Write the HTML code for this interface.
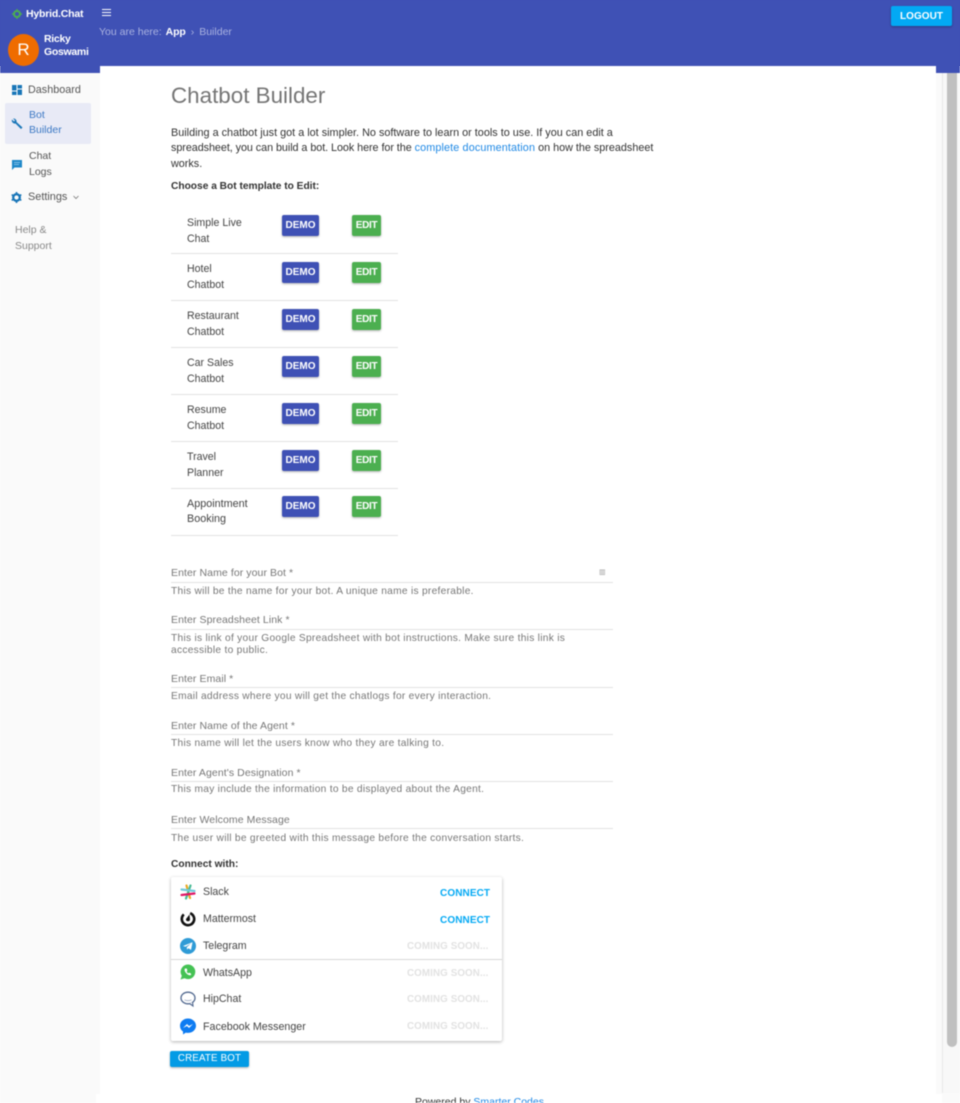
<!DOCTYPE html>
<html><head><meta charset="utf-8"><title>Chatbot Builder</title>
<style>
html,body{margin:0;padding:0;width:960px;height:1103px;overflow:hidden;font-family:"Liberation Sans",sans-serif}
body{background:linear-gradient(#3f51b5 0,#3f51b5 66px,#fff 66px)}
#p{position:relative;width:960px;height:1103px;overflow:hidden;background:#fafafa;filter:blur(.45px)}
.t{position:absolute;white-space:nowrap;line-height:16px;font-size:11px;color:#444}
.b{position:absolute;box-sizing:border-box;}
.btn{position:absolute;border-radius:2px;color:#fff;font-size:10px;font-weight:bold;text-align:center;box-shadow:0 1px 2px rgba(0,0,0,.3)}
.demo{background:#3f51b5;width:37px;height:21px;line-height:21px;left:282px}
.edit{background:#4caf50;width:29px;height:21px;line-height:21px;left:352px;letter-spacing:-.3px}
.ln{position:absolute;height:1px;background:#e2e2e2}
.lab{color:#777;font-size:10.5px;left:171px;letter-spacing:.08px}
.hint{color:#777;font-size:10.2px;left:171px;letter-spacing:.28px}
.cn{color:#03a9f4;font-size:10px;font-weight:bold;letter-spacing:.1px}
.cs{color:#e2e2e2;font-size:9.8px;font-weight:bold;letter-spacing:.1px}
.r{left:187px;line-height:15.5px;font-size:10.6px}
.li{left:203px;font-size:10.6px}
svg{position:absolute}
</style></head><body><div id="p">
<div class="b" style="left:0;top:0;width:960px;height:66px;background:#3f51b5"></div>
<div class="b" style="left:0;top:66px;width:100px;height:7px;background:#3f51b5"></div>
<div class="b" style="left:100px;top:66px;width:836px;height:1037px;background:#fff;border-radius:2px 2px 0 0"></div>
<div class="b" style="left:936px;top:73px;width:24px;height:1030px;background:#fafafa"></div>
<div class="b" style="left:936px;top:66px;width:24px;height:7px;background:#3f51b5"></div>
<div class="b" style="left:942px;top:73px;width:18px;height:1020px;background:#f8f8f8;border-left:1px solid #e8e8e8"></div>
<div class="b" style="left:947px;top:73px;width:10px;height:974px;background:#c0c0c0;border-radius:0 0 5px 5px"></div>

<svg style="left:12px;top:9px" width="10" height="10" viewBox="0 0 10 10"><circle cx="5" cy="5" r="3" fill="none" stroke="#4caf50" stroke-width="2"/><path d="M5 0v2M5 8v2M0 5h2M8 5h2" stroke="#4caf50" stroke-width="1.2"/></svg>
<div class="t" style="left:26px;top:6px;color:#fff;font-weight:bold;font-size:10.5px;letter-spacing:-.2px">Hybrid.Chat</div>
<div class="b" style="left:8px;top:34px;width:31px;height:32px;border-radius:50%;background:#ef6c00;color:#fff;font-size:17px;line-height:32px;text-align:center">R</div>
<div class="t" style="left:44px;top:33px;color:#fff;font-weight:bold;font-size:10.5px;line-height:12.5px;letter-spacing:-.3px">Ricky<br>Goswami</div>
<svg style="left:102px;top:9px" width="9" height="7" viewBox="0 0 9 7"><path d="M0 .5h9M0 3.500h9M0 6.500h9" stroke="#fff" stroke-width="1"/></svg>
<div class="t" style="left:99px;top:24px;color:#aab2e0;font-size:10.5px;line-height:17px">You are here: <b style="color:#fff;margin-left:1px;letter-spacing:-.1px">App</b><span style="margin:0 5px">›</span>Builder</div>
<div class="btn" style="left:891px;top:6px;width:61px;height:20px;line-height:22px;background:#03a9f4;letter-spacing:.05px">LOGOUT</div>

<svg style="left:12px;top:85px" width="10" height="10" viewBox="0 0 10 10" fill="#1976b8"><path d="M0 0h4.500v5.500H0zM5.500 0H10v3.500H5.500zM5.500 4.500H10V10H5.500zM0 6.500h4.500V10H0z"/></svg>
<div class="t" style="left:28px;top:82px;font-size:10.8px;color:#555">Dashboard</div>
<div class="b" style="left:5px;top:103px;width:86px;height:41px;background:#e8eaf6;border-radius:2px"></div>
<svg style="left:11px;top:118px" width="12" height="12" viewBox="0 0 12 12"><path d="M1 1.500 3 3.500l1-1-2-2a3 3 0 0 1 3.500 3.500L11.500 9.500 10 11 4.500 5.500A3 3 0 0 1 1 1.500z" fill="#1976b8"/></svg>
<div class="t" style="left:29px;top:108px;font-size:10.500px;line-height:15px;color:#3b78c4">Bot<br>Builder</div>
<svg style="left:12px;top:160px" width="10" height="10" viewBox="0 0 10 10"><path d="M0 0h10v7.500H2.500L0 10z" fill="#1e88c9"/><path d="M2 2.500h6M2 4.500h5" stroke="#9fd0ee" stroke-width=".7"/></svg>
<div class="t" style="left:29px;top:148px;font-size:10.5px;color:#555">Chat<br>Logs</div>
<svg style="left:11px;top:192px" width="11" height="11" viewBox="0 0 11 11"><circle cx="5.500" cy="5.500" r="3.300" fill="none" stroke="#1976b8" stroke-width="2.300"/><path d="M5.500 0v2M5.500 9v2M.7 2.700l1.700 1M8.600 7.300l1.700 1M.7 8.300l1.700-1M8.600 3.700l1.700-1" stroke="#1976b8" stroke-width="1.600"/></svg>
<div class="t" style="left:28px;top:189px;font-size:10.9px;color:#555">Settings</div>
<svg style="left:73px;top:195px" width="6" height="5" viewBox="0 0 6 5"><path d="M.5 1 3 3.500 5.500 1" fill="none" stroke="#777" stroke-width=".8"/></svg>
<div class="t" style="left:15px;top:221.500px;font-size:10.5px;color:#888">Help &amp;<br>Support</div>

<div class="t" style="left:171px;top:82px;font-size:22.4px;line-height:27px;color:#757575">Chatbot Builder</div>
<div class="t" style="left:171px;top:124.500px;font-size:10.85px;color:#333">Building a chatbot just got a lot simpler. No software to learn or tools to use. If you can edit a</div>
<div class="t" style="left:171px;top:139.500px;font-size:10.8px;color:#333"><span style="letter-spacing:-.06px">spreadsheet, you can build a bot. Look here for the </span><span style="color:#1e88e5;letter-spacing:.13px">complete documentation</span> on how the spreadsheet</div>
<div class="t" style="left:171px;top:156px;font-size:10.8px;color:#333">works.</div>
<div class="t" style="left:171px;top:179px;font-size:10.2px;font-weight:bold;color:#333">Choose a Bot template to Edit:</div>

<div class="t r" style="top:216px">Simple Live<br>Chat</div><div class="btn demo" style="top:215px">DEMO</div><div class="btn edit" style="top:215px">EDIT</div><div class="ln" style="left:171px;top:253px;width:227px"></div>
<div class="t r" style="top:262px">Hotel<br>Chatbot</div><div class="btn demo" style="top:262px">DEMO</div><div class="btn edit" style="top:262px">EDIT</div><div class="ln" style="left:171px;top:300px;width:227px"></div>
<div class="t r" style="top:309px">Restaurant<br>Chatbot</div><div class="btn demo" style="top:309px">DEMO</div><div class="btn edit" style="top:309px">EDIT</div><div class="ln" style="left:171px;top:347px;width:227px"></div>
<div class="t r" style="top:356px">Car Sales<br>Chatbot</div><div class="btn demo" style="top:356px">DEMO</div><div class="btn edit" style="top:356px">EDIT</div><div class="ln" style="left:171px;top:394px;width:227px"></div>
<div class="t r" style="top:403px">Resume<br>Chatbot</div><div class="btn demo" style="top:403px">DEMO</div><div class="btn edit" style="top:403px">EDIT</div><div class="ln" style="left:171px;top:441px;width:227px"></div>
<div class="t r" style="top:450px">Travel<br>Planner</div><div class="btn demo" style="top:450px">DEMO</div><div class="btn edit" style="top:450px">EDIT</div><div class="ln" style="left:171px;top:488px;width:227px"></div>
<div class="t r" style="top:496.500px;font-size:10.800px">Appointment<br>Booking</div><div class="btn demo" style="top:496px">DEMO</div><div class="btn edit" style="top:496px">EDIT</div><div class="ln" style="left:171px;top:535px;width:227px"></div>

<div class="t lab" style="top:565px">Enter Name for your Bot *</div><div class="ln" style="left:171px;top:582px;width:442px"></div>
<div class="t" style="left:599px;top:565px;font-size:7px;color:#999">▥</div>
<div class="t hint" style="top:583.500px">This will be the name for your bot. A unique name is preferable.</div>
<div class="t lab" style="top:612px">Enter Spreadsheet Link *</div><div class="ln" style="left:171px;top:629px;width:442px"></div>
<div class="t hint" style="top:632.500px;line-height:12px">This is link of your Google Spreadsheet with bot instructions. Make sure this link is<br>accessible to public.</div>
<div class="t lab" style="top:671px">Enter Email *</div><div class="ln" style="left:171px;top:687px;width:442px"></div>
<div class="t hint" style="top:689px">Email address where you will get the chatlogs for every interaction.</div>
<div class="t lab" style="top:718px">Enter Name of the Agent *</div><div class="ln" style="left:171px;top:734px;width:442px"></div>
<div class="t hint" style="top:736px">This name will let the users know who they are talking to.</div>
<div class="t lab" style="top:765px">Enter Agent's Designation *</div><div class="ln" style="left:171px;top:781px;width:442px"></div>
<div class="t hint" style="top:782px">This may include the information to be displayed about the Agent.</div>
<div class="t lab" style="top:812px">Enter Welcome Message</div><div class="ln" style="left:171px;top:828px;width:442px"></div>
<div class="t hint" style="top:831px">The user will be greeted with this message before the conversation starts.</div>
<div class="t" style="left:171px;top:856.500px;font-size:10.2px;font-weight:bold;color:#333">Connect with:</div>

<div class="b" style="left:171px;top:877px;width:331px;height:164px;background:#fff;border-radius:2px;box-shadow:0 1px 3px rgba(0,0,0,.3)"></div>
<div class="ln" style="left:171px;top:959px;width:331px;background:#d8d8d8"></div>

<svg style="left:180px;top:884px" width="16" height="16" viewBox="0 0 16 16" stroke-width="2.200" stroke-linecap="round"><path d="M6.500 1.500 10 14" stroke="#e9a820"/><path d="M10.500 1.500 6 14.500" stroke="#3eb890" opacity=".95"/><path d="M1.500 5.500 14.500 7" stroke="#70cadb"/><path d="M1.500 11 14.500 9.500" stroke="#e01765"/></svg>
<div class="t li" style="top:884px">Slack</div><div class="t cn" style="left:440px;top:886px">CONNECT</div>
<svg style="left:180px;top:911px" width="16" height="16" viewBox="0 0 16 16"><circle cx="8" cy="8" r="6.200" fill="none" stroke="#111" stroke-width="2.600" stroke-dasharray="32 7" transform="rotate(-70 8 8)"/><path d="M9.500 3.500 10 8.500a2 2 0 1 1-4-.5z" fill="#111"/></svg>
<div class="t li" style="top:911px">Mattermost</div><div class="t cn" style="left:440px;top:913px">CONNECT</div>
<svg style="left:180px;top:938px" width="16" height="16" viewBox="0 0 16 16"><circle cx="8" cy="8" r="8" fill="#2f9bd6"/><path d="M3 8 12.500 4.200 11 12 8.500 10.200 7 11.500 6.800 9.300 11 5.500 5.500 8.800z" fill="#fff"/></svg>
<div class="t li" style="top:938px">Telegram</div><div class="t cs" style="left:407px;top:939px">COMING SOON...</div>
<svg style="left:180px;top:964px" width="16" height="16" viewBox="0 0 16 16"><path d="M8 0.500a7.300 7.300 0 0 1 0 14.600 7.300 7.300 0 0 1-3.500-.9L.5 15.500l1.300-3.800A7.300 7.300 0 0 1 8 .5z" fill="#45c254"/><path d="M5 4.500c-1 1.500 0 3.500 1.500 5s3.500 2.300 4.700 1.300l-.5-1.600-1.700-.5-.8.700C7.500 9 7 8.300 6.700 7.300l.7-.9L6.700 4.500z" fill="#fff"/></svg>
<div class="t li" style="top:965px">WhatsApp</div><div class="t cs" style="left:407px;top:966px">COMING SOON...</div>
<svg style="left:180px;top:991px" width="16" height="16" viewBox="0 0 16 16"><ellipse cx="8" cy="7" rx="7" ry="5.800" fill="none" stroke="#51688f" stroke-width="1.300"/><path d="M4.500 8.800c2 1.200 5 1.200 7 0" fill="none" stroke="#9aa8c0" stroke-width=".8"/><path d="M9.500 12.500 13 15 12.500 11" fill="#fff" stroke="#51688f" stroke-width="1.100"/></svg>
<div class="t li" style="top:991px">HipChat</div><div class="t cs" style="left:407px;top:992px">COMING SOON...</div>
<svg style="left:180px;top:1018px" width="16" height="17" viewBox="0 0 16 17"><path d="M8 .5c4.400 0 8 3.200 8 7.200s-3.600 7.200-8 7.200c-.8 0-1.500-.1-2.200-.3L3 16.500v-3A7 7 0 0 1 0 7.700C0 3.700 3.600.5 8 .5z" fill="#0e7cf2"/><path d="M3 10 7 6l2 2 4-2-4 4-2-2z" fill="#fff"/></svg>
<div class="t li" style="top:1019px;font-size:10.7px">Facebook Messenger</div><div class="t cs" style="left:407px;top:1019px">COMING SOON...</div>

<div class="btn" style="left:170px;top:1051px;width:79px;height:16px;line-height:16px;background:#039be5;font-weight:normal;font-size:9.7px;letter-spacing:.2px">CREATE BOT</div>
<div class="b" style="left:96px;top:1094px;width:846px;height:9px;background:#fff"></div>
<div class="t" style="left:415px;top:1094px;font-size:10.5px;color:#333">Powered by <span style="color:#1e88e5">Smarter Codes</span></div>
</div></body></html>
